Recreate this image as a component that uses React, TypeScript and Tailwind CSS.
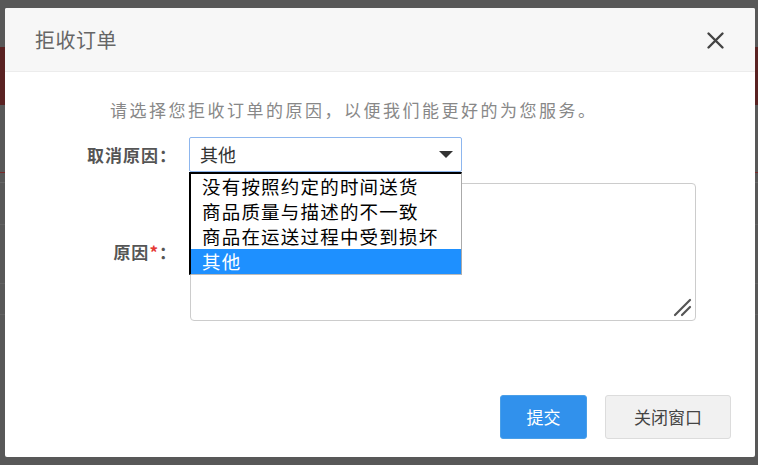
import React from 'react';

const font = { fontFamily: '"Noto Sans CJK SC", "Noto Sans", sans-serif' };

const reasons = ['没有按照约定的时间送货', '商品质量与描述的不一致', '商品在运送过程中受到损坏', '其他'];

export default function App() {
  const selected = '其他';

  return (
    <div className="relative w-[758px] h-[465px] overflow-hidden bg-[#585858]" style={font}>
      {/* page underneath the overlay */}
      <div className="absolute inset-0 flex flex-col">
        <div className="h-[47px]" />
        <div className="h-[58px] bg-[#5a2222]" />
        <div className="h-[67px]" />
        <div className="h-[1px] bg-[#7a2a2a]" />
        <div className="h-[9px]" />
        <div className="h-[1px] bg-[#666]" />
        <div className="h-[41px]" />
        <div className="h-[1px] bg-[#626262]" />
        <div className="h-[58px]" />
        <div className="h-[1px] bg-[#626262]" />
        <div className="h-[30px]" />
        <div className="h-[1px] bg-[#626262]" />
      </div>

      {/* dialog */}
      <div className="relative ml-[5px] mt-[8px] w-[750px] h-[449px] bg-white rounded-[2px] flex flex-col">
        <div className="h-[64px] shrink-0 bg-[#f7f7f7] border-b border-[#ececec] rounded-t-[2px] flex items-center justify-between pl-[30px] pr-[30px]">
          <span className="text-[20px] text-[#666] tracking-[0.5px]">拒收订单</span>
          <svg width="19" height="19" viewBox="0 0 19 19" className="mt-[1px]">
            <path d="M2.5 2.5 L16.5 16.5 M16.5 2.5 L2.5 16.5" stroke="#444" strokeWidth="2.4" strokeLinecap="round" />
          </svg>
        </div>

        <div className="pl-[105px] pt-[26px] text-[17px] leading-[24px] text-[#888] tracking-[2.5px]">
          请选择您拒收订单的原因，以便我们能更好的为您服务。
        </div>

        <div className="mt-[15px] grid grid-cols-[172px_1fr] gap-x-[12px] gap-y-[11px] items-center pr-[59px]">
          <div className="text-right text-[17px] font-bold text-[#555] tracking-[1px]">取消原因：</div>
          <div className="relative z-10 w-[273px]">
            <div className="h-[35px] border border-[#8db6ee] rounded-[2px] bg-white flex items-center justify-between pl-[10px] pr-[8px]">
              <span className="text-[18px] text-[#333]">{selected}</span>
              <svg width="14" height="8" viewBox="0 0 14 8">
                <path d="M0 0 H14 L7 7 Z" fill="#333" />
              </svg>
            </div>
            <div className="absolute left-0 top-[35px] w-[273px] bg-white border-t-2 border-l-2 border-black border-r border-r-[#aaa] border-b border-b-[#bbb]">
              {reasons.map((r) => (
                <div
                  key={r}
                  className={`h-[25px] pl-[11px] text-[18.5px] leading-[25px] whitespace-nowrap tracking-[1.2px] ${
                    r === selected ? 'bg-[#1e90ff] text-white' : 'text-black'
                  }`}
                >
                  {r}
                </div>
              ))}
            </div>
          </div>

          <div className="text-right text-[17px] font-bold text-[#555] tracking-[1px]">
            原因<span className="text-[#e53935]">*</span>：
          </div>
          <div className="relative ml-[1px] h-[138px] border border-[#ccc] rounded-[4px] bg-white">
            <svg width="22" height="22" viewBox="0 0 22 22" className="absolute right-[2px] bottom-[2px]">
              <path d="M4 19 L19 4 M11 19 L19 11" stroke="#555" strokeWidth="2.2" strokeLinecap="round" />
            </svg>
          </div>
        </div>

        <div className="mt-auto mb-[18px] flex justify-end gap-[18px] pr-[24px]">
          <button className="w-[87px] h-[44px] rounded-[3px] bg-[#3191ec] border border-[#4a9fe8] text-white text-[17px]">
            提交
          </button>
          <button className="w-[126px] h-[44px] rounded-[3px] bg-[#f1f1f1] border border-[#dcdcdc] text-[#444] text-[17px]">
            关闭窗口
          </button>
        </div>
      </div>
    </div>
  );
}
